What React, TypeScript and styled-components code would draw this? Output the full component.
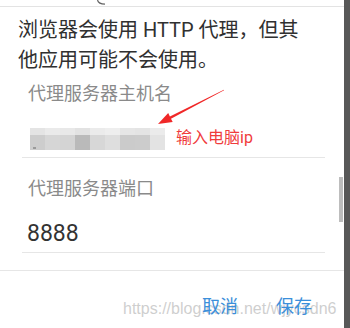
import styled, { createGlobalStyle } from 'styled-components';

const GlobalStyle = createGlobalStyle`
  html, body {
    margin: 0;
    padding: 0;
    background: #ffffff;
  }
  body {
    font-family: Roboto, "Noto Sans CJK SC", sans-serif;
  }
`;

const top = ['#e4e4e4', '#eaeaea', '#e8e8e8', '#e2e2e2', '#ebebeb', '#eeeeee', '#e6e6e6', '#e4e4e4', '#ebebeb'];
const bottom = ['#cdcdcd', '#d6d6d6', '#d4d4d4', '#bababa', '#d7d7d7', '#dedede', '#cbcbcb', '#cccccc', '#e3e3e3'];

const Mosaic = function () {
  return (
    <svg width="135" height="22" xmlns="http://www.w3.org/2000/svg">
      {top.map((c, i) => (
        <rect key={'t' + i} x={i * 15} y="0" width="15" height="7" fill={c} />
      ))}
      {bottom.map((c, i) => (
        <rect key={'b' + i} x={i * 15} y="7" width="15" height="15" fill={c} />
      ))}
      <rect x="3" y="19" width="3" height="2" fill="#9a9a9a" />
    </svg>
  );
};

export default function App() {
  return (
    <>
      <GlobalStyle />
      <Screen>
        <Dialog>
          <TopStrip>
            <svg width="12" height="6" xmlns="http://www.w3.org/2000/svg">
              <path d="M1.5 0 Q2.5 4 9 4.2" stroke="#666" strokeWidth="1.2" fill="none" />
            </svg>
          </TopStrip>
          <Message>
            浏览器会使用 HTTP 代理，但其
            <br />
            他应用可能不会使用。
          </Message>

          <Field $gap={7}>
            <Label>代理服务器主机名</Label>
            <InputRow $pad={22}>
              <Mosaic />
              <Note>输入电脑ip</Note>
            </InputRow>
            <Arrow width="80" height="46" xmlns="http://www.w3.org/2000/svg">
              <polygon
                points="8,40 22.7,38 21,34.8 74.1,6.3 73.9,5.7 19.9,32.4 18.2,29.1"
                fill="#f02828"
              />
            </Arrow>
          </Field>

          <Field $gap={19}>
            <Label>代理服务器端口</Label>
            <InputRow $pad={18}>
              <Value>8888</Value>
            </InputRow>
          </Field>

          <Divider />

          <Buttons>
            <Action>取消</Action>
            <Action>保存</Action>
          </Buttons>

          <Watermark>https://blog.csdn.net/wjycsdn6</Watermark>
          <Thumb />
        </Dialog>
        <Edge />
      </Screen>
    </>
  );
}

const Screen = styled.div`
  display: flex;
  width: 350px;
  height: 328px;
  overflow: hidden;
`;

const Dialog = styled.div`
  position: relative;
  flex: 0 0 344px;
  display: flex;
  flex-direction: column;
  background: #ffffff;
`;

const Edge = styled.div`
  flex: 0 0 6px;
  background: #585858;
`;

const TopStrip = styled.div`
  height: 6px;
  border-bottom: 1px solid #e3e3e3;
  padding-left: 96px;
  svg {
    display: block;
  }
`;

const Message = styled.div`
  margin: 8px 0 0 18px;
  font-size: 20px;
  line-height: 30px;
  color: #303030;
`;

const Field = styled.div<{ $gap: number }>`
  position: relative;
  margin: ${(p) => p.$gap}px 19px 0 22px;
`;

const Label = styled.div`
  padding-left: 6px;
  font-size: 18px;
  line-height: 24px;
  color: #8a8a8a;
`;

const InputRow = styled.div<{ $pad: number }>`
  box-sizing: border-box;
  height: 52px;
  display: flex;
  align-items: flex-start;
  gap: 11px;
  padding: ${(p) => p.$pad}px 0 0 8px;
  border-bottom: 1px solid #e6e6e6;
  svg {
    display: block;
  }
`;

const Note = styled.span`
  font-size: 16px;
  line-height: 20px;
  color: #f03c3c;
`;

const Value = styled.span`
  margin-left: -3px;
  font-size: 23px;
  line-height: 30px;
  color: #333333;
`;

const Arrow = styled.svg`
  position: absolute;
  left: 128px;
  top: 2px;
`;

const Divider = styled.div`
  margin-top: 17px;
  height: 1px;
  background: #e6e6e6;
`;

const Buttons = styled.div`
  display: flex;
  justify-content: flex-end;
  gap: 38px;
  margin-top: 24px;
  padding-right: 32px;
`;

const Action = styled.span`
  position: relative;
  z-index: 1;
  font-size: 18px;
  line-height: 24px;
  color: #3b8fda;
`;

const Watermark = styled.div`
  position: absolute;
  left: 123px;
  top: 298px;
  font-family: "Liberation Sans", Arial, sans-serif;
  font-size: 16px;
  line-height: 22px;
  color: rgba(190, 190, 190, 0.75);
  white-space: nowrap;
`;

const Thumb = styled.div`
  position: absolute;
  right: 1px;
  top: 177px;
  width: 4px;
  height: 45px;
  background: #bdbdbd;
`;
